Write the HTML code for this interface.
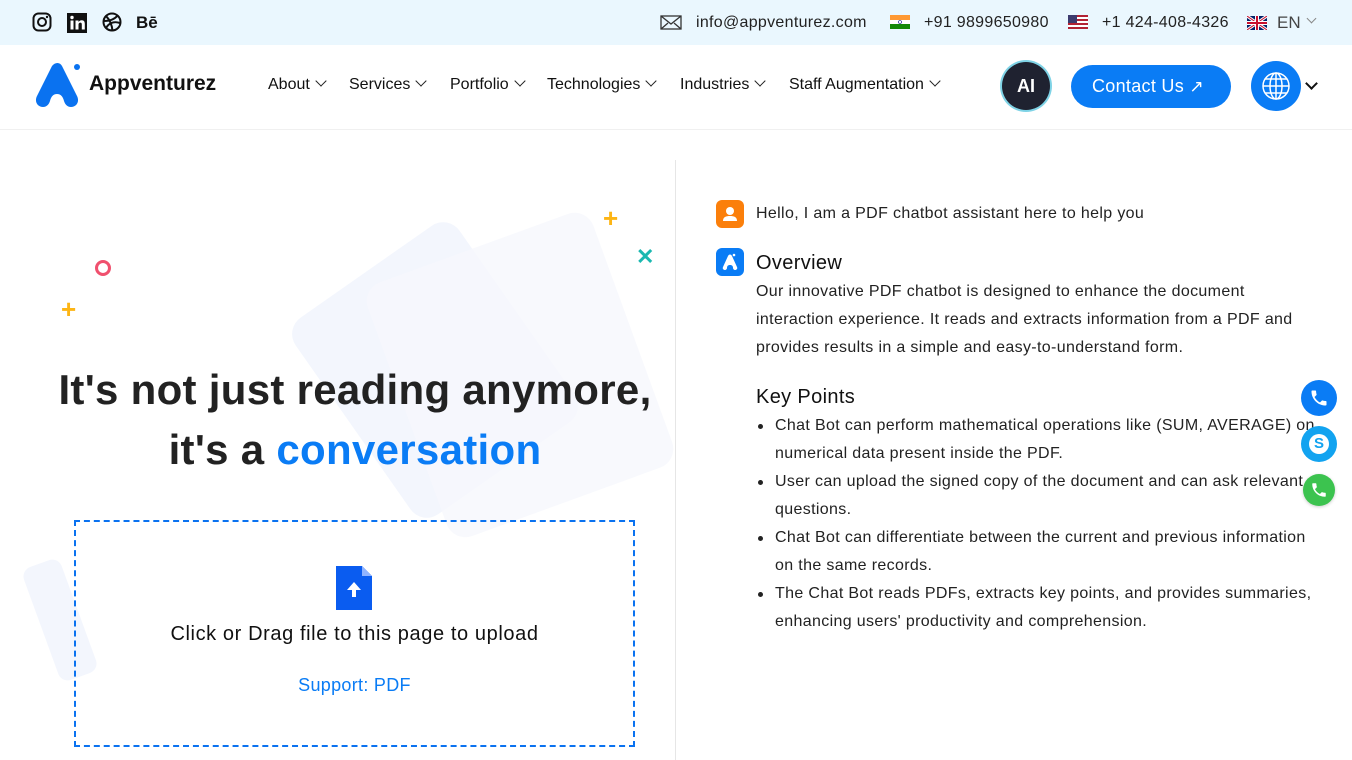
<!DOCTYPE html>
<html><head><meta charset="utf-8"><style>
*{margin:0;padding:0;box-sizing:border-box}
body{width:1352px;height:760px;overflow:hidden;background:#fff;font-family:"Liberation Sans",sans-serif;color:#222;position:relative}
.top{position:absolute;left:0;top:0;width:1352px;height:45px;background:#eaf7fe}
.abs{position:absolute}
.nav{position:absolute;top:76px;font-size:16px;color:#111}
.chev{display:inline-block;width:8px;height:8px;border-right:1.5px solid #222;border-bottom:1.5px solid #222;transform:rotate(45deg);margin-left:7px;position:relative;top:-4px}
.hdr{position:absolute;top:129px;left:0;width:1352px;height:1px;background:#f0f0f0}
.rt{position:absolute;left:756px;font-size:16px;color:#222;line-height:28px;letter-spacing:.35px}
ul.kp{position:absolute;left:756px;top:412px;width:560px;font-size:16px;line-height:28px;color:#222;list-style:none;letter-spacing:.35px}
ul.kp li{padding-left:19px;position:relative}
ul.kp li:before{content:"";position:absolute;left:2px;top:12px;width:5px;height:5px;border-radius:50%;background:#222}
</style></head><body>
<div class="top"></div>
<svg class="abs" style="left:32px;top:12px" width="20" height="20" viewBox="0 0 20 20"><rect x="1.5" y="1.5" width="17" height="17" rx="5" fill="none" stroke="#111" stroke-width="2"/><circle cx="10" cy="10" r="4" fill="none" stroke="#111" stroke-width="2"/><circle cx="15" cy="5" r="1.2" fill="#111"/></svg>
<svg class="abs" style="left:67px;top:13px" width="20" height="20" viewBox="0 0 20 20"><rect width="20" height="20" fill="#111"/><rect x="3.5" y="7.5" width="3" height="9" fill="#fff"/><circle cx="5" cy="4.5" r="1.7" fill="#fff"/><path d="M8.5 7.5h3v1.5c.6-1 1.8-1.8 3.3-1.8 2.2 0 3 1.4 3 3.8v5.5h-3v-5c0-1.2-.4-1.9-1.4-1.9s-1.9.7-1.9 1.9v5h-3z" fill="#fff"/></svg>
<svg class="abs" style="left:102px;top:12px" width="20" height="20" viewBox="0 0 20 20" fill="none" stroke="#111" stroke-width="2"><circle cx="10" cy="10" r="8.5"/><path d="M4 4c4 4 6 9 6.5 15M2 9c6 0 11-2 14-6M4 16c3-5 8-7 14-5"/></svg>
<div class="abs" style="left:136px;top:13px;font-weight:bold;font-size:17px;color:#111">Bē</div>
<svg class="abs" style="left:660px;top:15px" width="22" height="15" viewBox="0 0 22 15" fill="none" stroke="#333" stroke-width="1.3"><rect x="1" y="1" width="20" height="13"/><path d="M1 1l10 8 10-8M1 14l7-6M21 14l-7-6"/></svg>
<div class="abs" style="left:696px;top:14px;font-size:16px;color:#222;letter-spacing:.3px">info@appventurez.com</div>
<svg class="abs" style="left:890px;top:15px" width="20" height="14"><rect width="20" height="5" fill="#f93"/><rect y="5" width="20" height="4" fill="#fff"/><rect y="9" width="20" height="5" fill="#138808"/><circle cx="10" cy="7" r="1.5" fill="none" stroke="#008" stroke-width=".6"/></svg>
<div class="abs" style="left:924px;top:14px;font-size:16px;color:#222;letter-spacing:.3px">+91 9899650980</div>
<svg class="abs" style="left:1068px;top:15px" width="20" height="14"><rect width="20" height="14" fill="#b22234"/><rect y="2" width="20" height="2" fill="#fff"/><rect y="6" width="20" height="2" fill="#fff"/><rect y="10" width="20" height="2" fill="#fff"/><rect width="9" height="8" fill="#3c3b6e"/></svg>
<div class="abs" style="left:1102px;top:14px;font-size:16px;color:#222;letter-spacing:.3px">+1 424-408-4326</div>
<svg class="abs" style="left:1247px;top:16px" width="20" height="14" viewBox="0 0 20 14"><rect width="20" height="14" fill="#012169"/><path d="M0 0L20 14M20 0L0 14" stroke="#fff" stroke-width="3"/><path d="M0 0L20 14M20 0L0 14" stroke="#c8102e" stroke-width="1"/><path d="M10 0v14M0 7h20" stroke="#fff" stroke-width="4"/><path d="M10 0v14M0 7h20" stroke="#c8102e" stroke-width="2"/></svg>
<div class="abs" style="left:1277px;top:13px;font-size:17px;color:#444">EN</div>
<div class="abs" style="left:1308px;top:15px;width:7px;height:7px;border-right:1px solid #888;border-bottom:1px solid #888;transform:rotate(45deg)"></div>
<svg class="abs" style="left:32px;top:63px" width="50" height="46" viewBox="0 0 50 46"><path d="M20 3c3-4 8-4 10 0l15 30c3 6-1 11-6 11-4 0-6-3-7-6-1-4-3-7-7-7s-6 3-7 7c-1 3-3 6-7 6-5 0-9-5-6-11z" fill="#0a72f0"/><circle cx="45" cy="4" r="3" fill="#0a72f0"/></svg>
<div class="abs" style="left:89px;top:72px;font-size:21px;font-weight:bold;color:#111">Appventurez</div>
<div class="nav" style="left:268px">About<span class="chev"></span></div>
<div class="nav" style="left:349px">Services<span class="chev"></span></div>
<div class="nav" style="left:450px">Portfolio<span class="chev"></span></div>
<div class="nav" style="left:547px">Technologies<span class="chev"></span></div>
<div class="nav" style="left:680px">Industries<span class="chev"></span></div>
<div class="nav" style="left:789px">Staff Augmentation<span class="chev"></span></div>
<div class="abs" style="left:1002px;top:62px;width:48px;height:48px;border-radius:50%;background:#1f2230;box-shadow:0 0 0 2px #7fd3e6;color:#fff;font-weight:bold;font-size:18px;text-align:center;line-height:48px">AI</div>
<div class="abs" style="left:1071px;top:65px;width:160px;height:43px;border-radius:22px;background:#0a7cf5;color:#fff;font-size:18px;line-height:43px;padding-left:21px;letter-spacing:.3px">Contact Us <span style="font-size:17px">↗</span></div>
<div class="abs" style="left:1251px;top:61px;width:50px;height:50px;border-radius:50%;background:#0a7cf5"></div>
<svg class="abs" style="left:1261px;top:71px" width="30" height="30" viewBox="0 0 30 30" fill="none" stroke="#fff" stroke-width="1.5"><circle cx="15" cy="15" r="13"/><ellipse cx="15" cy="15" rx="6" ry="13"/><path d="M2 15h26M15 2v26M4 8h22M4 22h22"/></svg>
<div class="abs" style="left:1307px;top:79px;width:9px;height:9px;border-right:2px solid #111;border-bottom:2px solid #111;transform:rotate(45deg)"></div>
<div class="hdr"></div>
<div class="abs" style="left:675px;top:160px;width:1px;height:600px;background:#e6e6e6"></div>
<div class="abs" style="left:335px;top:250px;width:200px;height:240px;border-radius:20px;background:#f3f6fd;transform:rotate(-35deg)"></div>
<div class="abs" style="left:400px;top:240px;width:240px;height:270px;border-radius:20px;background:#f6f8fd;opacity:.8;transform:rotate(-20deg)"></div>
<div class="abs" style="left:40px;top:560px;width:40px;height:120px;border-radius:10px;background:#f3f6fd;transform:rotate(-20deg)"></div>
<div class="abs" style="left:603px;top:205px;color:#fdb515;font-size:26px;font-weight:bold;line-height:26px">+</div>
<div class="abs" style="left:61px;top:296px;color:#fdb515;font-size:26px;font-weight:bold;line-height:26px">+</div>
<div class="abs" style="left:95px;top:260px;width:16px;height:16px;border-radius:50%;border:3px solid #f0506e"></div>
<div class="abs" style="left:636px;top:244px;color:#1bb8b0;font-size:22px;font-weight:bold;line-height:26px">✕</div>
<div class="abs" style="left:30px;top:360px;width:650px;text-align:center;font-size:42px;font-weight:bold;line-height:60px;color:#222;letter-spacing:.3px">It's not just reading anymore,<br>it's a <span style="color:#0a7cf5">conversation</span></div>
<div class="abs" style="left:74px;top:520px;width:561px;height:227px;border:2px dashed #0a72f0"></div>
<svg class="abs" style="left:336px;top:566px" width="36" height="44" viewBox="0 0 36 44"><path d="M0 0h26l10 10v34H0z" fill="#0a5cf0"/><path d="M26 0v10h10" fill="#8fb3ff"/><path d="M18 16l-7 8h5v7h4v-7h5z" fill="#fff"/></svg>
<div class="abs" style="left:74px;top:623px;width:561px;text-align:center;font-size:20px;color:#111;letter-spacing:.6px">Click or Drag file to this page to upload</div>
<div class="abs" style="left:74px;top:675px;width:561px;text-align:center;font-size:18px;color:#0a7cf5;letter-spacing:.3px">Support: PDF</div>
<div class="abs" style="left:716px;top:200px;width:28px;height:28px;border-radius:6px;background:#fb7f0b"></div>
<svg class="abs" style="left:716px;top:200px" width="28" height="28"><circle cx="14" cy="11" r="4" fill="#fff"/><path d="M7 21c0-4 3-5 7-5s7 1 7 5z" fill="#fff"/></svg>
<div class="rt" style="top:200px">Hello, I am a PDF chatbot assistant here to help you</div>
<div class="abs" style="left:716px;top:248px;width:28px;height:28px;border-radius:6px;background:#0a7cf5"></div>
<svg class="abs" style="left:716px;top:248px" width="28" height="28" viewBox="0 0 28 28"><path d="M12 8c1-2 3-2 4 0l5 11c1 2-1 3-2 3s-2-1-2-2c0-2-1-3-3-3s-3 1-3 3c0 1-1 2-2 2s-3-1-2-3z" fill="#fff"/><circle cx="18" cy="7" r="1.3" fill="#fff"/></svg>
<div class="rt" style="top:249px;font-size:20px;color:#111">Overview</div>
<div class="rt" style="top:278px;width:560px">Our innovative PDF chatbot is designed to enhance the document interaction experience. It reads and extracts information from a PDF and provides results in a simple and easy-to-understand form.</div>
<div class="rt" style="top:383px;font-size:20px;color:#111">Key Points</div>
<ul class="kp">
<li>Chat Bot can perform mathematical operations like (SUM, AVERAGE) on numerical data present inside the PDF.</li>
<li>User can upload the signed copy of the document and can ask relevant questions.</li>
<li>Chat Bot can differentiate between the current and previous information on the same records.</li>
<li>The Chat Bot reads PDFs, extracts key points, and provides summaries, enhancing users' productivity and comprehension.</li>
</ul>
<div class="abs" style="left:1301px;top:380px;width:36px;height:36px;border-radius:50%;background:#0a7cf5"></div>
<svg class="abs" style="left:1309px;top:388px" width="20" height="20" viewBox="0 0 24 24"><path d="M6.6 10.8c1.4 2.8 3.8 5.1 6.6 6.6l2.2-2.2c.3-.3.7-.4 1-.2 1.1.4 2.3.6 3.6.6.6 0 1 .4 1 1V20c0 .6-.4 1-1 1C10.6 21 3 13.4 3 4c0-.6.4-1 1-1h3.5c.6 0 1 .4 1 1 0 1.3.2 2.5.6 3.6.1.3 0 .7-.2 1z" fill="#fff"/></svg>
<div class="abs" style="left:1301px;top:426px;width:36px;height:36px;border-radius:50%;background:#12a3f0"></div>
<div class="abs" style="left:1309px;top:434px;width:20px;height:20px;border-radius:50%;background:#fff;color:#12a3f0;font-weight:bold;font-size:15px;text-align:center;line-height:20px">S</div>
<div class="abs" style="left:1303px;top:474px;width:32px;height:32px;border-radius:50%;background:#3cc34f;box-shadow:0 1px 3px rgba(0,0,0,.2)"></div>
<svg class="abs" style="left:1310px;top:481px" width="18" height="18" viewBox="0 0 24 24"><path d="M6.6 10.8c1.4 2.8 3.8 5.1 6.6 6.6l2.2-2.2c.3-.3.7-.4 1-.2 1.1.4 2.3.6 3.6.6.6 0 1 .4 1 1V20c0 .6-.4 1-1 1C10.6 21 3 13.4 3 4c0-.6.4-1 1-1h3.5c.6 0 1 .4 1 1 0 1.3.2 2.5.6 3.6.1.3 0 .7-.2 1z" fill="#fff"/></svg>
</body></html>
